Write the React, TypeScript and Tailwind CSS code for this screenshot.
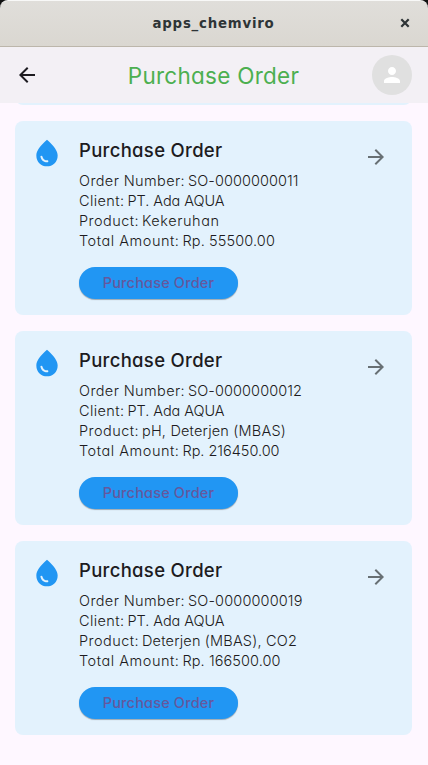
import { useLayoutEffect, useRef, useState } from "react";
import { MdArrowBack, MdArrowForward, MdPerson, MdWaterDrop } from "react-icons/md";

type FitTextProps = { text: string; width: number; className?: string };

// Spreads the letters of one line so that it spans the given width.
function FitText({ text, width, className = "" }: FitTextProps) {
  const ref = useRef<HTMLSpanElement>(null);
  const [spacing, setSpacing] = useState(0);
  useLayoutEffect(() => {
    const el = ref.current;
    if (!el) return;
    el.style.letterSpacing = "0px";
    const natural = el.getBoundingClientRect().width;
    const next = (width - natural) / text.length;
    el.style.letterSpacing = `${next}px`;
    setSpacing(next);
  }, [text, width]);
  return (
    <span ref={ref} className={`inline-block whitespace-nowrap ${className}`} style={{ letterSpacing: `${spacing}px` }}>
      {text}
    </span>
  );
}

type Field = { label: string; labelWidth: number; value: string; valueWidth: number };

const client: Field = { label: "Client:", labelWidth: 45.5, value: "PT. Ada AQUA", valueWidth: 97 };

const orders: Field[][] = [
  [
    { label: "Order Number:", labelWidth: 106, value: "SO-0000000011", valueWidth: 110.5 },
    client,
    { label: "Product:", labelWidth: 60, value: "Kekeruhan", valueWidth: 77.5 },
    { label: "Total Amount:", labelWidth: 100.5, value: "Rp. 55500.00", valueWidth: 92.5 },
  ],
  [
    { label: "Order Number:", labelWidth: 106, value: "SO-0000000012", valueWidth: 114 },
    client,
    { label: "Product:", labelWidth: 60, value: "pH, Deterjen (MBAS)", valueWidth: 144 },
    { label: "Total Amount:", labelWidth: 100.5, value: "Rp. 216450.00", valueWidth: 97 },
  ],
  [
    { label: "Order Number:", labelWidth: 106, value: "SO-0000000019", valueWidth: 114.5 },
    client,
    { label: "Product:", labelWidth: 60, value: "Deterjen (MBAS), CO2", valueWidth: 155 },
    { label: "Total Amount:", labelWidth: 100.5, value: "Rp. 166500.00", valueWidth: 98 },
  ],
];

function OrderCard({ fields }: { fields: Field[] }) {
  return (
    <article className="flex h-[194px] shrink-0 items-start rounded-lg bg-[#e3f2fd] px-4 pt-4">
      <MdWaterDrop className="size-8 shrink-0 text-[#2196f3]" />
      <div className="ml-4 flex flex-1 flex-col items-start">
        <h2 className="flex h-[26px] items-center text-[18.5px] leading-[26px] font-medium text-[#1d1b20]">
          <FitText text="Purchase Order" width={143.5} />
        </h2>
        <div className="mt-2 flex flex-col items-start text-[14.5px] leading-5 font-light text-[#1d1b20]">
          {fields.map((field) => (
            <div key={field.label} className="flex gap-[3px]">
              <FitText text={field.label} width={field.labelWidth} />
              <FitText text={field.value} width={field.valueWidth} />
            </div>
          ))}
        </div>
        <button className="mt-4 flex h-8 w-[159px] items-center justify-center rounded-full bg-[#2196f3] text-[14.5px] leading-8 font-medium text-[#66589d] shadow-[0_1px_1px_rgba(0,0,0,0.3)]">
          <FitText text="Purchase Order" width={111.5} />
        </button>
      </div>
      <MdArrowForward className="mt-2 mr-2 size-6 shrink-0 text-[#687074]" />
    </article>
  );
}

export default function App() {
  return (
    <div className="flex h-[765px] w-[428px] flex-col overflow-hidden bg-[#fef7ff] font-[Inter,'Open_Sans',sans-serif] [font-feature-settings:'cv11']">
      <div className="shrink-0 bg-[#111]">
        <div className="grid h-[47px] grid-cols-[1fr_auto_1fr] items-center rounded-t-lg border-t border-b border-t-[#f8f8f7] border-b-[#bcb6ab] bg-linear-to-b from-[#e0deda] to-[#dad7d1] text-[#2e3436]">
          <span />
          <FitText
            text="apps_chemviro"
            width={122}
            className="-ml-px font-['DejaVu_Sans',sans-serif] text-[13.33px] font-bold"
          />
          <svg viewBox="0 0 10 10" className="mr-[18px] mb-0.5 size-[10px] justify-self-end" stroke="currentColor" strokeWidth="2.2">
            <path d="M1.3 1.3 8.7 8.7M8.7 1.3 1.3 8.7" />
          </svg>
        </div>
      </div>
      <header className="grid h-14 shrink-0 grid-cols-[40px_1fr_40px] items-center bg-[#f3f0f5] pr-4 pl-[15px]">
        <MdArrowBack className="size-6 text-[#1d1b20]" />
        <h1 className="flex justify-center pt-0.5 text-[22.5px] leading-7 font-normal text-[#4caf50]">
          <FitText text="Purchase Order" width={171.5} />
        </h1>
        <div className="flex size-10 items-center justify-center rounded-full bg-[#e0e0e0]">
          <MdPerson className="size-6 text-white" />
        </div>
      </header>
      <main className="flex flex-1 flex-col gap-4 overflow-hidden pr-4 pl-[15px]">
        <div className="-mt-[18px] h-5 shrink-0 rounded-b-lg bg-[#e3f2fd] [clip-path:inset(18px_0_0_0)]" />
        {orders.map((fields) => (
          <OrderCard key={fields[0].value} fields={fields} />
        ))}
      </main>
    </div>
  );
}
